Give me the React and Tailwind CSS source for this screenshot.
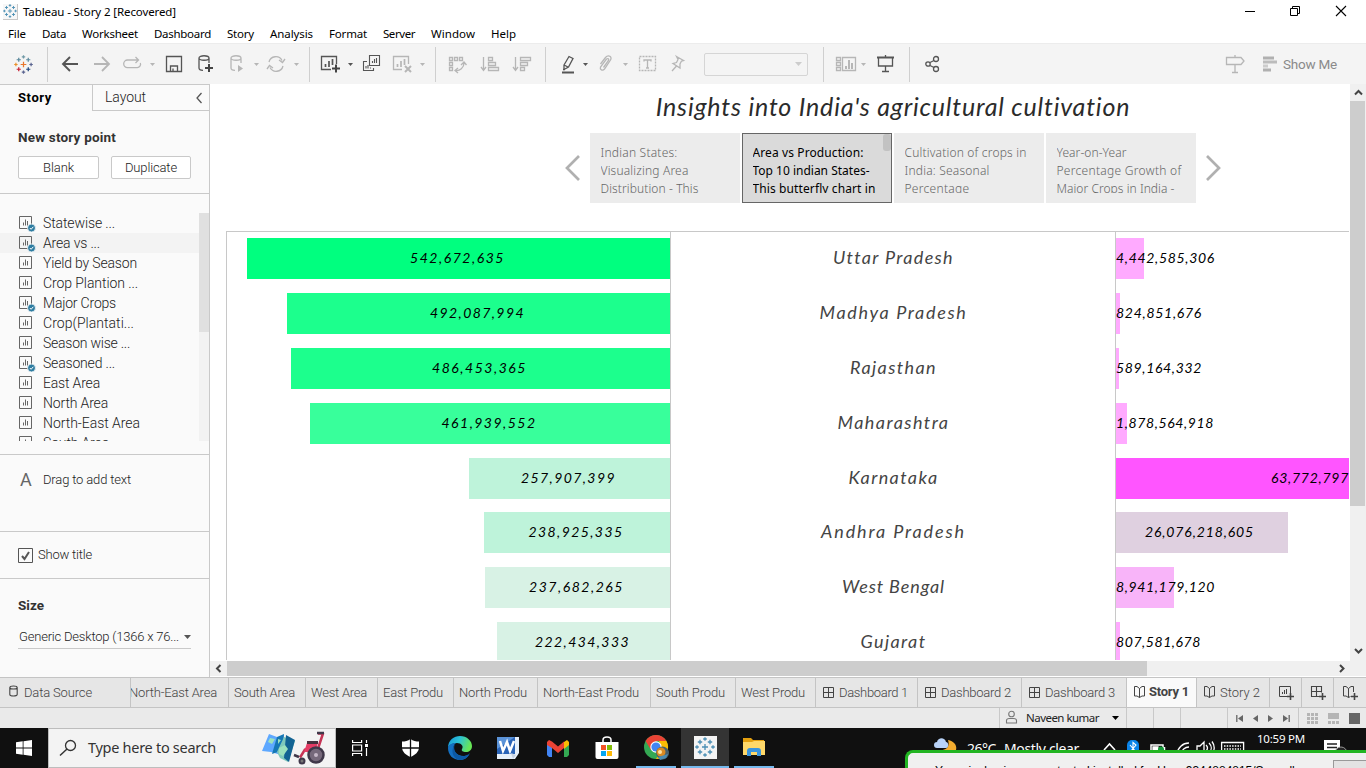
import React, { useLayoutEffect, useRef, useState } from 'react';

/* Text set to a given width by adjusting its tracking. */
function Fit({ w, className = '', children }) {
  const ref = useRef(null);
  const [spacing, setSpacing] = useState(0);
  useLayoutEffect(() => {
    const natural = ref.current.getBoundingClientRect().width;
    setSpacing((w - natural) / String(children).length);
  }, []);
  return (
    <span ref={ref} className={`inline-block shrink-0 whitespace-nowrap ${className}`} style={{ letterSpacing: `${spacing}px` }}>
      {children}
    </span>
  );
}

const UI = 'font-["Noto_Sans",sans-serif]';
const HAND = 'font-["Lato",cursive] italic';

function Svg({ w, h = 20, className = '', children }) {
  return (
    <svg width={w} height={h} viewBox={`0 0 ${w} ${h}`} fill="none" stroke="currentColor" strokeWidth="1.3" className={`shrink-0 overflow-visible ${className}`}>
      {children}
    </svg>
  );
}

const Caret = ({ className = '' }) => (
  <Svg w={5} className={className}><path d="M0 9h5L2.5 12z" fill="currentColor" stroke="none" /></Svg>
);
const Divider = ({ className = '' }) => <div className={`h-[35px] w-px shrink-0 bg-[#cfcfcf] ${className}`} />;

function Plus({ x, y, s, c }) {
  return <path d={`M${x - s} ${y}h${2 * s}M${x} ${y - s}v${2 * s}`} stroke={c} />;
}
function TableauMark({ size, className = '', mono }) {
  const c = mono ? Array(9).fill('#4c8fb4') : ['#e8762c', '#5c8a9e', '#5b6591', '#c72035', '#1f457e', '#7099a6', '#59879b', '#eb912c', '#7099a6'];
  return (
    <svg width={size} height={size} viewBox="0 0 20 20" fill="none" strokeWidth="1.3" className={`shrink-0 ${className}`}>
      <Plus x={10} y={10} s={3} c={c[0]} />
      <Plus x={5} y={5} s={2.2} c={c[6]} />
      <Plus x={15} y={5} s={2.2} c={c[1]} />
      <Plus x={5} y={15} s={2.2} c={c[3]} />
      <Plus x={15} y={15} s={2.2} c={c[4]} />
      <Plus x={10} y={2} s={1.8} c={c[5]} />
      <Plus x={10} y={18} s={1.8} c={c[2]} />
      <Plus x={2} y={10} s={1.8} c={c[7]} />
      <Plus x={18} y={10} s={1.8} c={c[2]} />
    </svg>
  );
}

const MENU = [
  ['File', 18], ['Data', 24], ['Worksheet', 56], ['Dashboard', 57], ['Story', 27],
  ['Analysis', 43], ['Format', 38], ['Server', 32], ['Window', 44], ['Help', 25],
];

function TitleBar() {
  return (
    <header className={`h-[43px] shrink-0 bg-white text-[11.5px] text-black ${UI}`}>
      <div className="flex h-[23px] items-center">
        <div className="ml-[3px] flex h-[16px] w-[15px] items-center justify-center border-r border-b border-[#c8c8c8] bg-[#f7f7f7]"><TableauMark size={14} mono /></div>
        <Fit w={153} className="ml-[5px]">Tableau - Story 2 [Recovered]</Fit>
        <Svg w={10} h={10} className="ml-auto -mt-[2px]"><path d="M0 5.5h10" strokeWidth="1" /></Svg>
        <Svg w={10} h={10} className="mr-[36px] ml-[35px] -mt-[2px]"><path d="M.5 2.5h7v7h-7zM2.5 2.5v-2h7v7h-2" strokeWidth="1" /></Svg>
        <Svg w={10} h={10} className="mr-[20px] -mt-[2px]"><path d="M0 0l10 10M10 0L0 10" strokeWidth="1.1" /></Svg>
      </div>
      <nav className="flex h-[20px] items-center pt-[2px]">
        {MENU.map(([t, w], i) => <Fit key={t} w={w} className={i === 0 ? 'ml-[8px]' : 'ml-[16px]'}>{t}</Fit>)}
      </nav>
    </header>
  );
}

const Cyl = () => <path d="M1 4c0-3 10-3 10 0s-10 3-10 0v10c0 1.600 2 2.300 4 2.300M11 4v5" />;

function Toolbar() {
  const on = 'text-[#555]';
  const off = 'text-[#b6b6b6]';
  return (
    <div className="flex h-[41px] shrink-0 items-center border-t border-[#ececec] bg-[#f4f4f4]">
      <TableauMark size={19} className="mr-px ml-[14px]" />
      <Divider className="ml-[13px]" />
      <Svg w={16} className={`ml-[14px] ${on}`}><path d="M16 10H1M8 3l-7 7 7 7" strokeWidth="1.9" /></Svg>
      <Svg w={16} className={`ml-[16px] ${off}`}><path d="M0 10h15M8 3l7 7-7 7" strokeWidth="1.8" /></Svg>
      <Svg w={18} className={`ml-[13px] ${off}`}><path d="M15.500 6H4.500a3.800 3.800 0 000 7.600h9.500a3.300 3.300 0 003.300-4.600M12.500 3l3 3-3 3" /></Svg>
      <Caret className={`ml-[9px] ${off}`} />
      <Svg w={16} className={`ml-[11px] ${on}`}><path d="M.5 2.500h15v15h-15zM4.500 17v-5h7v5M7 14.500v2.500" /></Svg>
      <Svg w={16} className={`ml-[16px] ${on}`}><Cyl /><path d="M11 10v8M7 14h8" stroke="#444" strokeWidth="2" /></Svg>
      <Svg w={14} className={`ml-[16px] ${off}`}><Cyl /><path d="M8 11l5 3.500L8 18z" fill="currentColor" stroke="none" /></Svg>
      <Caret className={`ml-[10px] ${off}`} />
      <Svg w={18} className={`ml-[8px] ${off}`}><path d="M2 8a7 7 0 0113-1.500M16 12a7 7 0 01-13 1.500M18 5l-2.500 3.500L12 6M0 15l2.500-3.500L6 14" /></Svg>
      <Caret className={`ml-[9px] ${off}`} />
      <Divider className="ml-[10px]" />
      <Svg w={19} className={`ml-[11px] ${on}`}><path d="M10 15.500H.5v-13h15V10" /><path d="M4.500 13V10M8 13V7M11.500 11V5" strokeWidth="1.700" /><path d="M15 10.500v8M11 14.500h8" stroke="#444" strokeWidth="2" /></Svg>
      <Caret className={`ml-[8px] ${on}`} />
      <Svg w={17} className={`ml-[10px] ${on}`}><path d="M6.500 1.500h10v10h-10zM4 7.500H.500v9h10V14M9.500 9V7M11.500 9V5M13.500 9V4M3 14.500V12M5 14.500V11M7.500 14.500v-1" strokeWidth="1.100" /></Svg>
      <Svg w={19} className={`ml-[13px] ${off}`}><path d="M9 15.500H.5v-13h15V10" /><path d="M4.500 13V10M8 13V7M11.500 11V5" strokeWidth="1.700" /><path d="M12 12l6 6M18 12l-6 6" strokeWidth="2" /></Svg>
      <Caret className={`ml-[8px] ${off}`} />
      <Divider className="ml-[10px]" />
      <Svg w={18} className={`ml-[13px] ${off}`}><path d="M.500 3.500h3v3h-3zM5.500 3.500h3v3h-3zM10.500 3.500h3v3h-3zM.500 8.500h3v3h-3zM.500 13.500h3v3h-3zM6 16.500c5 1 9-3 9-7.500M12 11l3-3 2.500 3M9 14l-3 2.500L9 19" /></Svg>
      <Svg w={18} className={`ml-[14px] ${off}`}><path d="M2.500 3v13M0 13l2.500 3.500L5 13M7.500 3.500h4v3h-4zM7.500 8.500h7v3h-7zM7.500 13.500h10v3h-10z" /></Svg>
      <Svg w={18} className={`ml-[14px] ${off}`}><path d="M2.500 3v13M0 13l2.500 3.500L5 13M7.500 3.500h10v3h-10zM7.500 8.500h7v3h-7zM7.500 13.500h4v3h-4z" /></Svg>
      <Divider className="ml-[14px]" />
      <Svg w={12} className={`ml-[16px] ${on}`}><path d="M2 11L7 2.500l4 2L6.500 13 2 15.500zM2 11l4 2M1 15.500h2" /><path d="M0 18.500h12" strokeWidth="2" /></Svg>
      <Caret className={`ml-[9px] ${on}`} />
      <Svg w={13} className={`ml-[11px] ${off}`}><path d="M1.500 10L6.500 3.500c3-3.500 7-.5 5 2.500L5.500 15c-2 2.500-5 .500-4-2L7.500 5c1.500-1 2.800 0 2 1.500L4.500 13.500" /></Svg>
      <Caret className={`ml-[11px] ${off}`} />
      <Svg w={17} className={`ml-[11px] ${off}`}><path d="M.500 2.500h16v14H.500z" strokeDasharray="2 1" /><path d="M5 7.500V6h7v1.500M8.500 6v8M7 14h3" /></Svg>
      <Svg w={13} className={`ml-[15px] ${off}`}><path d="M5.500 2.500l7 4-2 .500-1.500 3v4L2 9.500l3.500-1 1.500-3zM5.500 12L1 17" /></Svg>
      <div className="ml-[20px] flex h-[23px] w-[104px] shrink-0 items-center justify-end rounded-[2px] border border-[#d5d5d5] pr-[5px] text-[#ccc]">
        <Svg w={7} h={4}><path d="M0 0h7L3.500 4z" fill="currentColor" stroke="none" /></Svg>
      </div>
      <Divider className="ml-[15px]" />
      <Svg w={20} className={`ml-[12px] ${off}`}><path d="M.500 3.500h4v3h-4zM.500 8.500h4v3h-4zM.500 13.500h4v3h-4zM6.500 3.500h13v13h-13z" /><path d="M10 15v-3M13 15V6M16 15V9" strokeWidth="2" /></Svg>
      <Caret className={`ml-[5px] ${off}`} />
      <Svg w={17} className={`ml-[11px] ${on}`}><path d="M0 3.500h17" strokeWidth="2" /><path d="M1.500 4v8h14V4M8.500 1v2M8.500 12v5M5 17.500h7" /></Svg>
      <Divider className="ml-[15px]" />
      <Svg w={14} className={`ml-[15px] ${on}`}><circle cx="3" cy="10" r="2.200" /><circle cx="11" cy="5" r="2.500" /><circle cx="11" cy="15" r="2.500" /><path d="M5 8.500l4-2M5 11.500l4 2" /></Svg>
      <Svg w={18} className={`ml-[287px] ${off}`}><path d="M.500 3.500H15l3 3.500-3 3.500H.500zM9 1v2M9 11v7M6 18.500h6" /></Svg>
      <Svg w={14} className="ml-[19px]"><path d="M0 4h11M0 16h8" stroke="#b0b0b0" strokeWidth="3" /><path d="M0 8h14" stroke="#bcbcbc" strokeWidth="3" /><path d="M0 12h5" stroke="#ccc" strokeWidth="3" /></Svg>
      <Fit w={54} className="ml-[6px] font-['Roboto',sans-serif] text-[13.5px] text-[#8a8a8a]">Show Me</Fit>
    </div>
  );
}

const SheetIcon = ({ used }) => (
  <Svg w={16} h={16} className="text-[#666]">
    <path d="M.500 1.500h12v12H.500z" strokeWidth="1" />
    <path d="M4.500 10.500V7.500M6.500 10.500V4.500M8.500 10.500V6" strokeWidth="1" />
    {used && <><circle cx="12.500" cy="13" r="4" fill="#2f7da1" stroke="#fafafa" strokeWidth=".8" /><path d="M10.800 13l1.300 1.300 2.200-2.500" stroke="#fff" strokeWidth="1" /></>}
  </Svg>
);

const SHEETS = [
  ['Statewise ...', 72, true], ['Area vs ...', 57, true], ['Yield by Season', 94], ['Crop Plantion ...', 95], ['Major Crops', 73, true],
  ['Crop(Plantati...', 91], ['Season wise ...', 87], ['Seasoned ...', 72, true], ['East Area', 57], ['North Area', 65], ['North-East Area', 97], ['South Area', 66],
];

function Sidebar() {
  const line = 'border-b border-[#c9c9c9]';
  return (
    <aside className="flex w-[210px] shrink-0 flex-col border-t border-r border-[#c9c9c9] bg-[#fafafa] font-['Roboto',sans-serif] text-[13px] font-light text-[#222]">
      <div className="flex h-[26px] shrink-0">
        <div className="flex w-[92px] items-center pl-[18px] font-bold text-black"><Fit w={34}>Story</Fit></div>
        <div className="flex flex-1 items-center border-b border-l border-[#c9c9c9] pl-[12px] text-[14px]">
          <Fit w={41}>Layout</Fit>
          <Svg w={6} h={10} className="mr-[7px] ml-auto text-[#555]"><path d="M5.500 0L1 5l4.500 5" /></Svg>
        </div>
      </div>
      <div className={`h-[83px] shrink-0 px-[18px] pt-[16px] ${line}`}>
        <div className="flex h-[20px] items-center text-[13.5px] font-bold text-[#333]"><Fit w={98}>New story point</Fit></div>
        <div className="mt-[9px] flex gap-[12px]">
          <div className="flex h-[23px] w-[81px] items-center justify-center rounded-[2px] border border-[#c9c9c9] bg-white"><Fit w={31}>Blank</Fit></div>
          <div className="flex h-[23px] w-[80px] items-center justify-center rounded-[2px] border border-[#c9c9c9] bg-white"><Fit w={52}>Duplicate</Fit></div>
        </div>
      </div>
      <div className={`h-[261px] shrink-0 pt-[19px] ${line}`}>
        <div className="flex h-[228px] overflow-hidden">
          <div className="flex-1">
            {SHEETS.map(([name, w, used], i) => (
              <div key={name} className={`flex h-[20px] items-center pl-[19px] text-[14px] ${i === 1 ? 'bg-[#f3f3f3]' : ''}`}>
                <SheetIcon used={used} />
                <Fit w={w} className="ml-[8px] mt-px">{name}</Fit>
              </div>
            ))}
          </div>
          <div className="w-[10px] bg-[#f2f2f2]"><div className="h-[119px] bg-[#e0e0e0]" /></div>
        </div>
      </div>
      <div className={`flex h-[77px] shrink-0 items-start pt-[15px] pl-[20px] ${line}`}>
        <span className="w-[23px] text-[18px] leading-5 font-normal text-[#666]">A</span>
        <Fit w={88} className="leading-5">Drag to add text</Fit>
      </div>
      <div className={`flex h-[47px] shrink-0 items-center pl-[18px] ${line}`}>
        <Svg w={15} h={15} className="text-[#555]"><path d="M.500.500h14v14H.500z" strokeWidth="1" /><path d="M4 8l2.500 3L11 4" strokeWidth="2" /></Svg>
        <Fit w={54} className="ml-[5px]">Show title</Fit>
      </div>
      <div className="px-[18px] pt-[16px]">
        <div className="flex h-[20px] items-center text-[13.5px] font-bold text-[#333]"><Fit w={26}>Size</Fit></div>
        <div className="mt-[11px] flex h-[23px] items-center border-b border-[#c9c9c9] pl-px">
          <Fit w={160}>Generic Desktop (1366 x 76...</Fit>
          <Svg w={7} h={4} className="ml-[5px] text-[#555]"><path d="M0 0h7L3.500 4z" fill="currentColor" stroke="none" /></Svg>
        </div>
      </div>
    </aside>
  );
}

const POINTS = [
  [['Indian States:', 77], ['Visualizing Area', 88], ['Distribution - This', 98]],
  [['Area vs Production:', 111], ['Top 10 indian States-', 117], ['This butterfly chart in', 123]],
  [['Cultivation of crops in', 122], ['India: Seasonal', 85], ['Percentage', 65]],
  [['Year-on-Year', 70], ['Percentage Growth of', 125], ['Major Crops in India -', 118]],
];

function StoryPoints() {
  return (
    <div className="flex h-[70px] items-center pl-[355px]">
      <Svg w={15} h={26} className="text-[#b0b0b0]"><path d="M14 1L2 13l12 12" strokeWidth="2.700" /></Svg>
      <div className="mx-[10px] flex h-full gap-[2px]">
        {POINTS.map((lines, i) => (
          <div key={i} className={`flex h-full w-[150px] justify-between border pt-[10px] pl-[9.5px] ${UI} text-[12px] ${i === 1 ? 'border-[#666] bg-[#dadada] text-black' : 'border-[#ececec] bg-[#ececec] font-light text-[#666]'}`}>
            <div className="h-[49px] overflow-hidden">
              {lines.map(([t, w]) => <div key={t} className="h-[18px] leading-[18px]"><Fit w={w}>{t}</Fit></div>)}
            </div>
            {i === 1 && <div className="-mt-[10px] h-[17px] w-[8px] shrink-0 rounded-[3px] bg-[#c2c2c2]" />}
          </div>
        ))}
      </div>
      <Svg w={15} h={26} className="text-[#b0b0b0]"><path d="M1 1l12 12L1 25" strokeWidth="2.700" /></Svg>
    </div>
  );
}

const ROWS = [
  { area: '542,672,635', aw: 'w-[423px]', ac: 'bg-[#00ff7f]', state: 'Uttar Pradesh', sw: 120, prod: '4,442,585,306', tw: 99, pw: 'w-[28px]', pc: 'bg-[#ffaaff]' },
  { area: '492,087,994', aw: 'w-[383px]', ac: 'bg-[#1cff8d]', state: 'Madhya Pradesh', sw: 148, prod: '824,851,676', tw: 86, pw: 'w-[4px]', pc: 'bg-[#ffaaff]' },
  { area: '486,453,365', aw: 'w-[379px]', ac: 'bg-[#1cff8d]', state: 'Rajasthan', sw: 87, prod: '589,164,332', tw: 86, pw: 'w-[3px]', pc: 'bg-[#ffaaff]' },
  { area: '461,939,552', aw: 'w-[360px]', ac: 'bg-[#38ff9b]', state: 'Maharashtra', sw: 112, prod: '1,878,564,918', tw: 98, pw: 'w-[11px]', pc: 'bg-[#ffaaff]' },
  { area: '257,907,399', aw: 'w-[201px]', ac: 'bg-[#bef3da]', state: 'Karnataka', sw: 90, prod: '63,772,797', tw: 78, pw: 'w-[233px]', pc: 'bg-[#ff55ff]', pos: 'justify-end', short: true },
  { area: '238,925,335', aw: 'w-[186px]', ac: 'bg-[#bef3da]', state: 'Andhra Pradesh', sw: 145, prod: '26,076,218,605', tw: 109, pw: 'w-[172px]', pc: 'bg-[#dfd0e0]', pos: 'justify-center pr-[5px]' },
  { area: '237,682,265', aw: 'w-[185px]', ac: 'bg-[#d8f2e5]', state: 'West Bengal', sw: 103, prod: '8,941,179,120', tw: 99, pw: 'w-[58px]', pc: 'bg-[#f8b4f9]' },
  { area: '222,434,333', aw: 'w-[173px]', ac: 'bg-[#d8f2e5]', state: 'Gujarat', sw: 66, prod: '807,581,678', tw: 85, pw: 'w-[4px]', pc: 'bg-[#ffaaff]' },
];

function Chart() {
  return (
    <div className="mt-[28px] ml-[16px] flex h-[429px] w-[1123px] overflow-hidden border-t border-l border-[#c8c8c8]">
      <div className="w-[444px] shrink-0 border-r border-[#c8c8c8]">
        {ROWS.map((r) => (
          <div key={r.state} className={`flex justify-end pt-[6px] ${r.short ? 'h-[54px]' : 'h-[55px]'}`}>
            <div className={`flex h-[41px] items-center justify-center pr-[2px] ${r.aw} ${r.ac}`}><Fit w={95} className={`-mt-[3px] text-[14px] text-black ${HAND}`}>{r.area}</Fit></div>
          </div>
        ))}
      </div>
      <div className="w-[445px] shrink-0 border-r border-[#c8c8c8]">
        {ROWS.map((r) => (
          <div key={r.state} className={`flex justify-center pt-[6px] pl-px ${r.short ? 'h-[54px]' : 'h-[55px]'}`}>
            <Fit w={r.sw} className={`h-[38px] text-[18px] leading-[38px] text-[#444] ${HAND}`}>{r.state}</Fit>
          </div>
        ))}
      </div>
      <div className="w-[233px] shrink-0">
        {ROWS.map((r) => (
          <div key={r.state} className={`pt-[6px] ${r.short ? 'h-[54px]' : 'h-[55px]'}`}>
            <div className={`flex h-[41px] items-center ${r.pos || ''} ${r.pw} ${r.pc}`}><Fit w={r.tw} className={`-mt-[3px] text-[14px] text-black ${HAND}`}>{r.prod}</Fit></div>
          </div>
        ))}
      </div>
    </div>
  );
}

const Chev = ({ d }) => <Svg w={9} h={9} className="text-[#444]"><path d={d} strokeWidth="2" /></Svg>;

function Workspace() {
  return (
    <main className="flex min-w-0 flex-1 flex-col bg-white">
      <div className="flex h-[577px]">
        <div className="h-[576px] w-[1139px] shrink-0 overflow-hidden">
          <div className="flex h-[49px] justify-center pt-[6px] pl-[227px]">
            <Fit w={474} className={`text-[25px] leading-[32px] text-[#2b2b2b] ${HAND}`}>Insights into India's agricultural cultivation</Fit>
          </div>
          <StoryPoints />
          <Chart />
        </div>
        <div className="ml-px flex w-[16px] flex-col items-center bg-[#f0f0f0]">
          <div className="flex h-[17px] items-center"><Chev d="M1 6.500L4.500 3 8 6.500" /></div>
          <div className="h-[405px] w-[15px] self-start bg-[#cdcdcd]" />
          <div className="mt-auto flex h-[18px] items-start pt-[3px]"><Chev d="M1 3l3.500 3.500L8 3" /></div>
        </div>
      </div>
      <div className="flex h-[15px] items-center bg-[#f0f0f0]">
        <div className="flex w-[17px] justify-center"><Chev d="M6.500 1L3 4.500 6.500 8" /></div>
        <div className="h-[15px] w-[920px] bg-[#cdcdcd]" />
        <div className="mr-[20px] ml-auto"><Chev d="M3 1l3.500 3.500L3 8" /></div>
      </div>
    </main>
  );
}

const DashIcon = () => <Svg w={11} h={11}><path d="M.500.500h10v10H.500zM5.500.500v10M.500 5.500h10" strokeWidth="1" /></Svg>;
const BookIcon = () => <Svg w={11} h={12} className="-mt-px"><path d="M.500.500H3l2.500 2L8 .500h2.500v9.500H8l-2.500 1.500L3 10H.500zM5.500 2.500v9" strokeWidth="1" /></Svg>;

const TABS = [
  ['North-East Area', 'w-[98px]', 88], ['South Area', 'w-[77px]', 61], ['West Area', 'w-[72px]', 56], ['East Produ', 'w-[76px]', 60],
  ['North Produ', 'w-[84px]', 68], ['North-East Produ', 'w-[113px]', 96], ['South Produ', 'w-[85px]', 69], ['West Produ', 'w-[80px]', 64],
];

function SheetTabs() {
  const sep = 'border-r border-[#c4c4c4]';
  return (
    <div className="flex h-[31px] shrink-0 border-y border-[#c4c4c4] bg-[#e6e6e6] font-['Roboto',sans-serif] text-[13px] font-light text-[#444]">
      <div className={`flex w-[131px] items-center pl-[9px] ${sep}`}>
        <Svg w={9} h={12} className="-mt-[3px]"><path d="M.800 2.500c0-2 7.400-2 7.400 0s-7.400 2-7.400 0v7c0 2 7.400 2 7.400 0v-7" strokeWidth="1.100" /></Svg>
        <Fit w={68} className="ml-[6px]">Data Source</Fit>
      </div>
      {TABS.map(([t, cw, w], i) => (
        <div key={t} className={`flex items-center overflow-hidden ${cw} ${sep} ${i === 0 ? '' : 'pl-[5px]'}`}><Fit w={w} className={i === 0 ? '-ml-[2px]' : ''}>{t}</Fit></div>
      ))}
      {['Dashboard 1', 'Dashboard 2', 'Dashboard 3'].map((t, i) => (
        <div key={t} className={`flex items-center gap-[5px] pl-[7px] ${i === 0 ? 'w-[102px]' : 'w-[104px]'} ${i === 2 ? '' : sep}`}><DashIcon /><Fit w={i === 0 ? 69 : 70}>{t}</Fit></div>
      ))}
      <div className={`flex w-[71px] items-center gap-[5px] border-l bg-[#fafafa] pl-[7px] font-bold text-[#444] ${sep}`}><BookIcon /><Fit w={40} className="-ml-px -mt-[2px]">Story 1</Fit></div>
      <div className={`flex w-[73px] items-center gap-[5px] pl-[7px] ${sep}`}><BookIcon /><Fit w={40}>Story 2</Fit></div>
      <div className={`flex w-[32px] items-center pl-[9px] ${sep}`}><Svg w={15} h={14}><path d="M9 10.500H.500v-10h11v7M3.500 8V6M5.500 8V4M7.500 8V3" strokeWidth="1" /><path d="M11.500 7v7M8 10.500h7" strokeWidth="1.600" /></Svg></div>
      <div className={`flex w-[32px] items-center pl-[9px] ${sep}`}><Svg w={15} h={14}><path d="M8 10.500H.500v-10h10v6M5.500.500v10M.500 5.500h10" strokeWidth="1.100" /><path d="M11.500 7v7M8 10.500h7" strokeWidth="1.600" /></Svg></div>
      <div className="flex w-[32px] items-center pl-[9px]"><Svg w={15} h={14}><path d="M10.500 6V.500H8l-2.500 2-2.500-2H.500V10H3l2.500 1.500 2-1M5.500 2.500v9" strokeWidth="1" /><path d="M11.500 7v7M8 10.500h7" strokeWidth="1.600" /></Svg></div>
    </div>
  );
}

function StatusBar() {
  const cell = 'h-full border-l border-[#c9c9c9]';
  return (
    <div className={`flex h-[20px] shrink-0 justify-end bg-[#eaeaea] text-[11.5px] text-[#222] ${UI}`}>
      <div className={`flex w-[127px] items-center pl-[6px] ${cell}`}>
        <Svg w={11} h={14} className="-mt-[2px] text-[#777]"><circle cx="5.500" cy="4" r="2.800" strokeWidth="1.100" /><path d="M.500 13v-2.500c0-2 2-2 3-2h4c1 0 3 0 3 2V13z" strokeWidth="1.100" /></Svg>
        <Fit w={73} className="ml-[9px]">Naveen kumar</Fit>
        <Svg w={7} h={4} className="ml-[13px] text-black"><path d="M0 0h7L3.500 4z" fill="currentColor" stroke="none" /></Svg>
      </div>
      <div className={`w-[27px] ${cell}`} /><div className={`w-[27px] ${cell}`} /><div className={`w-[47px] ${cell}`} />
      <div className={`flex w-[71px] items-center justify-between pr-[8px] pl-[8px] text-[#666] ${cell}`}>
        <Svg w={7} h={7}><path d="M.800 0v7" /><path d="M7 0v7L2 3.500z" fill="currentColor" stroke="none" /></Svg>
        <Svg w={5} h={7}><path d="M5 0v7L0 3.500z" fill="currentColor" stroke="none" /></Svg>
        <Svg w={5} h={7}><path d="M0 0v7l5-3.500z" fill="currentColor" stroke="none" /></Svg>
        <Svg w={7} h={7}><path d="M6.200 0v7" /><path d="M0 0v7l5-3.500z" fill="currentColor" stroke="none" /></Svg>
      </div>
      <div className={`flex w-[68px] items-center gap-[10px] pl-[8px] ${cell}`}>
        <Svg w={11} h={11} className="text-[#b5b5b5]"><path d="M0 1.500h11M0 5.500h11M0 9.500h11" strokeWidth="3" strokeDasharray="3 1" /></Svg>
        <Svg w={11} h={11} className="text-[#b5b5b5]"><path d="M0 3h11" strokeWidth="6" /><path d="M0 9.500h11" strokeWidth="3" strokeDasharray="3 1" /></Svg>
        <div className="h-[11px] w-[11px] bg-[#666]" />
      </div>
    </div>
  );
}

function SearchArt() {
  return (
    <svg width="66" height="36" viewBox="0 0 66 36" fill="none" className="shrink-0">
      <path d="M8 4l8 3 4 18-10-3-9-1z" fill="#5ea8ff" />
      <path d="M16 7l7-3-1 16-11 4z" fill="#1577b5" />
      <path d="M23 7l11 4-7 21-8-4-3-6z" fill="#80c9bb" />
      <path d="M25 5l9 5-6 22-5-4z" fill="#126393" />
      <path d="M9 8l5 1-3 5-4-2zM18 18l6-3 3 4-5 7-4-2zM17 9l3 1-3 4z" fill="#9ce1bd" />
      <path d="M57 3.500h5l-5 15-13 1-5 8" stroke="#c53455" strokeWidth="2.500" strokeLinejoin="round" />
      <path d="M46 13h11l-3 9H43z" fill="#e43c65" /><path d="M46 12.500h11" stroke="#46313e" strokeWidth="3" />
      <circle cx="55" cy="25" r="7.500" fill="#76697b" stroke="#40384a" strokeWidth="2.500" /><circle cx="55" cy="25" r="2" fill="#c5b7c7" />
      <circle cx="41" cy="31" r="2.500" fill="#777" stroke="#40384a" strokeWidth="2" /><path d="M33 25l5 2M56 3h7" stroke="#40384a" strokeWidth="2.500" />
    </svg>
  );
}

function Taskbar() {
  return (
    <footer className={`relative flex h-[40px] shrink-0 items-center bg-[#101010] text-white ${UI}`}>
      <Svg w={16} h={16} className="ml-[16px]"><path d="M0 2.300L6.700 1.300v6.300H0zM7.500 1.200L16 0v7.600H7.500zM0 8.400h6.700v6.300L0 13.700zM7.500 8.400H16V16l-8.500-1.200z" fill="#fff" stroke="none" /></Svg>
      <div className="ml-[16px] flex h-[40px] w-[288px] shrink-0 items-center border border-[#bdbdbd] bg-[#f3f3f3] pl-[11px] text-[#333]">
        <Svg w={16} h={16}><circle cx="10.500" cy="5.500" r="5" /><path d="M7 9L0 15.500" strokeWidth="1.500" /></Svg>
        <Fit w={128} className="ml-[12px] text-[14.5px]">Type here to search</Fit>
        <span className="ml-[45px]"><SearchArt /></span>
      </div>
      <Svg w={16} h={16} className="ml-[16px]"><path d="M.600 0v2.500h9V0M.600 16v-2.500h9V16M.600 5h9v6h-9zM14.500 0v3M14.500 8v8" strokeWidth="1.200" /><path d="M13 4h3v3h-3z" fill="#fff" stroke="none" /></Svg>
      <Svg w={17} h={18} className="ml-[34px]"><path d="M8.500 0C6 2 3 2.500 0 2.500V8c0 5 4 8 8.500 10C13 16 17 13 17 8V2.500c-3 0-6-.500-8.500-2.500z" fill="#fff" stroke="none" /><path d="M8.500 0v18M0 9h17" stroke="#101010" /></Svg>
      <svg width="24" height="24" viewBox="0 0 24 24" className="ml-[29px] shrink-0">
        <defs><linearGradient id="edge" x1="0" y1="0" x2="1" y2=".3"><stop offset="0" stopColor="#1595dc" /><stop offset=".5" stopColor="#2cc2d5" /><stop offset="1" stopColor="#67e657" /></linearGradient></defs>
        <path d="M0 12C0 4 6 0 12 0c7 0 12 5 12 10 0 4-3 6-6 6-3 0-5-1-4-3 2-3-1-6-5-6-5 0-9 3-9 5z" fill="url(#edge)" />
        <path d="M0 12c0-3 4-5 8-5-3 2-3 6-1 9 3 4 9 5 14 3-2 3-5 5-9 5-7 0-12-5-12-12z" fill="#1470c2" /><path d="M8 7c-3 3-2 8 1 11 3 3 9 3 13-1-2 5-7 7-11 7C4 22 2 13 8 7z" fill="#0c59a4" />
      </svg>
      <svg width="22" height="22" viewBox="0 0 22 22" className="ml-[25px] shrink-0"><path d="M0 0h22v16l-4 6H0z" fill="#e7f0fa" /><path d="M0 0h18v17H0z" fill="#2a64b8" /><path d="M0 0h18L0 12z" fill="#5b93d8" /><path d="M3 4l3 10 4-9 3 9 4-10" fill="none" stroke="#fff" strokeWidth="2.500" /><path d="M14 16l5 2-3 4z" fill="#c8d3e3" /></svg>
      <svg width="22" height="17" viewBox="0 0 22 17" className="ml-[28px] shrink-0"><path d="M0 3v12l2 2h3V7z" fill="#4285f4" /><path d="M22 3v12l-2 2h-3V7z" fill="#34a853" /><path d="M17 2l3-2 2 2v3l-5 4z" fill="#fbbc04" /><path d="M0 2l2-2 3 1.500 6 5 6-5V8l-6 5L5 8 0 5z" fill="#ea4335" /></svg>
      <svg width="24" height="24" viewBox="0 0 24 24" className="ml-[26px] shrink-0"><path d="M8 8V4c0-4 8-4 8 0v4" fill="none" stroke="#fff" strokeWidth="1.500" /><path d="M.500 6h23v15a2 2 0 01-2 2h-19a2 2 0 01-2-2z" fill="#fff" /><path d="M6 9h5v5H6z" fill="#f35325" /><path d="M12 9h5v5h-5z" fill="#81bc06" /><path d="M6 15h5v5H6z" fill="#05a6f0" /><path d="M12 15h5v5h-5z" fill="#ffba08" /></svg>
      <div className="ml-[17px] flex h-full w-[40px] shrink-0 items-center justify-center border-b-2 border-[#76b9ed]">
        <svg width="25" height="25" viewBox="0 0 25 25"><circle cx="12" cy="12" r="12" fill="#34a853" /><path d="M1.600 6A12 12 0 0122.400 6H12l-5 9z" fill="#ea4335" /><path d="M22.400 6A12 12 0 0112 24l5.500-9L15 6z" fill="#fbbc04" /><circle cx="12" cy="12" r="5.700" fill="#fff" /><circle cx="12" cy="12" r="4.600" fill="#4285f4" /><circle cx="18.500" cy="18" r="6.500" fill="#47606e" /><circle cx="17" cy="17" r="4.500" fill="#d98a22" /><circle cx="16" cy="17" r="2" fill="#ffe2a0" /><path d="M14 22l10-3-2 4-6 2z" fill="#4b8bb0" /></svg>
      </div>
      <div className="ml-[5px] flex h-full w-[48px] shrink-0 items-center justify-center border-b-2 border-[#76b9ed] bg-[#343434]">
        <div className="flex h-[23px] w-[23px] items-center justify-center bg-[#f4f4f4]"><TableauMark size={20} mono /></div>
      </div>
      <div className="ml-[5px] flex h-full w-[40px] shrink-0 items-center justify-center border-b-2 border-[#76b9ed]">
        <svg width="22" height="19" viewBox="0 0 22 19"><path d="M0 0h8l2 2h11v4H0z" fill="#e4a00f" /><path d="M0 4h9l2-1h11v14H0z" fill="#ffd869" /><path d="M4 18v-5a3 3 0 013-3h8a3 3 0 013 3v5h-4v-4H8v4z" fill="#3b95dd" /></svg>
      </div>
      <div className="ml-[160px] flex h-[40px] items-center">
        <svg width="23" height="24" viewBox="0 0 23 24" className="shrink-0"><path d="M14 4c2 6-1 10-7 10 1 5 7 7 12 4 5-3 5-12-5-14z" fill="#f3ac2f" /><path d="M3 12a3 3 0 010-6c1-5 8-5 9 0 3 0 3 6 0 6z" fill="#b9d3f8" /></svg>
        <Fit w={29} className="ml-[10px] text-[14px]">26°C</Fit>
        <Fit w={75} className="ml-[8px] text-[14px]">Mostly clear</Fit>
        <Svg w={11} h={12} className="ml-[25px]"><path d="M0 8l5.500-6L11 8" strokeWidth="1.600" /></Svg>
        <Svg w={12} h={17} className="ml-[12px]"><rect width="12" height="17" rx="5" fill="#0b84e8" stroke="none" /><path d="M3 5l6 7-3 2.500v-12L9 5l-6 7" strokeWidth="1.100" /></Svg>
        <Svg w={16} h={12} className="ml-[11px]"><path d="M1 3h12v8H1zM14.500 5v4" strokeWidth="1.500" /><path d="M3 5h5v6H3z" fill="#fff" /><circle cx="11" cy="7.500" r="3" fill="#169c3b" stroke="none" /></Svg>
        <Svg w={12} h={12} className="ml-[11px]"><path d="M0 12A12 12 0 0112 1M4 12a8 8 0 018-7M8 12a4 4 0 014-3" /></Svg>
        <Svg w={17} h={12} className="ml-[8px]"><path d="M0 4h3l4-4v12L3 9H0zM9 3c2 2 2 4 0 6M12 1c3 3 3 7 0 10M15-.500c3 4 3 9 0 12" /></Svg>
        <Svg w={23} h={13} className="ml-[7px]"><path d="M.600.500h22v11H.600z" /><path d="M3 4h17M3 7h17" strokeDasharray="1.500 1.200" /><path d="M6 10h11" /></Svg>
        <Fit w={48} className="-mt-[19px] ml-[13px] text-[11.5px]">10:59 PM</Fit>
        <svg width="24" height="22" viewBox="0 0 24 22" className="mt-[5px] ml-[19px] shrink-0"><path d="M0 0h16v14H0z" fill="#fff" /><path d="M3 4h10M3 7.500h10" stroke="#222" strokeWidth="1.300" /><circle cx="17" cy="13" r="6" fill="#252525" stroke="#999" /></svg>
      </div>
      <div className="absolute top-[22px] left-[905px] flex h-[18px] w-[461px] items-start justify-between overflow-hidden rounded-tl-[8px] border-t-[3px] border-l-[3px] border-[#22b522] bg-[#f0f0f0] text-black">
        <Fit w={363} className="mt-[11px] ml-[27px] font-['Liberation_Sans',sans-serif] text-[12px] leading-[14px]">Your single-sign-on protected installed for User 9344884815/Sanvelk</Fit>
        <div className="mt-[7px] h-[12px] w-[33px] shrink-0 border-t border-l border-[#999] bg-[#e3e3e3]" />
      </div>
    </footer>
  );
}

export default function App() {
  return (
    <div className="flex h-[768px] w-[1366px] flex-col overflow-hidden bg-white">
      <TitleBar />
      <Toolbar />
      <div className="flex h-[593px] shrink-0">
        <Sidebar />
        <Workspace />
      </div>
      <SheetTabs />
      <StatusBar />
      <Taskbar />
    </div>
  );
}
